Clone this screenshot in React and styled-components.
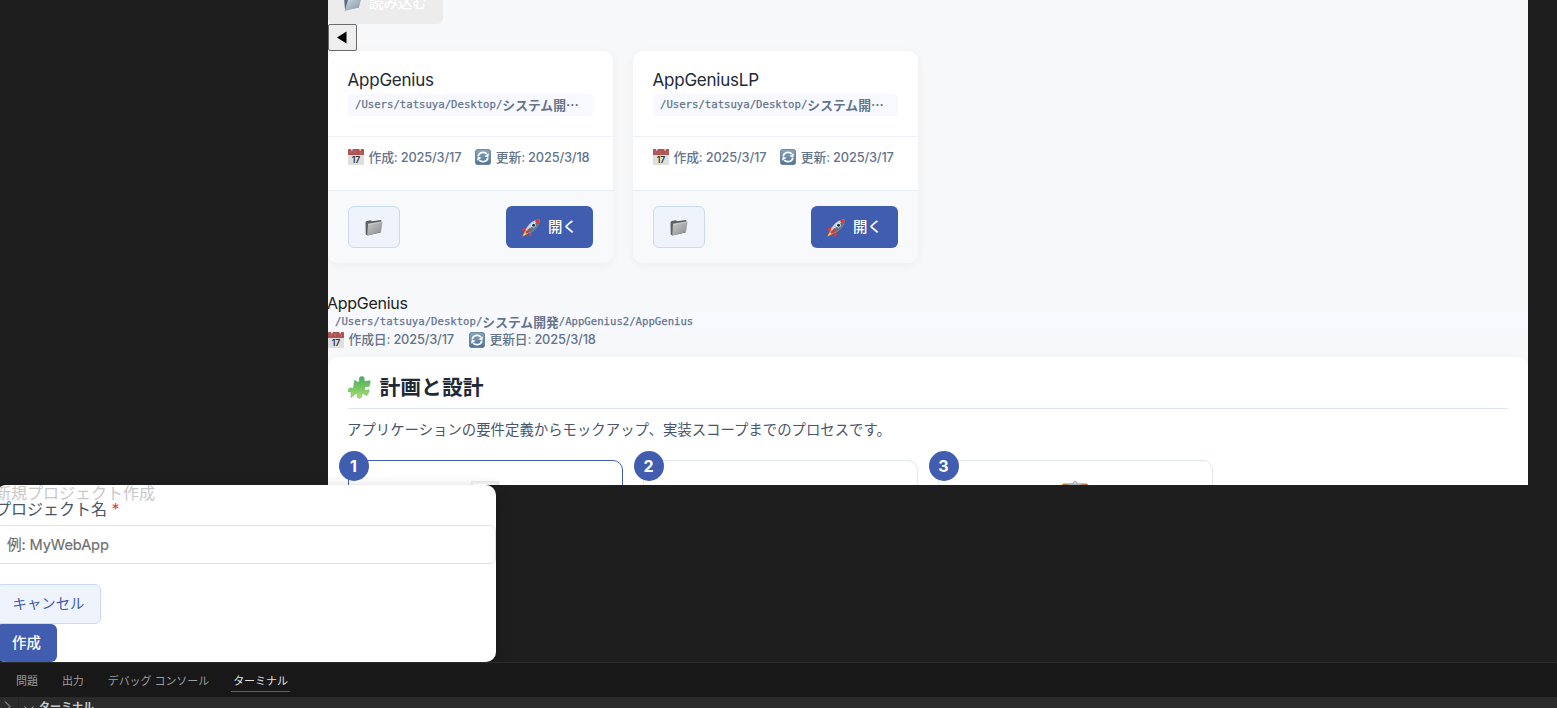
import React from 'react';
import styled, { createGlobalStyle, css } from 'styled-components';

const sans = `Inter, "Noto Sans CJK JP", sans-serif`;

const GlobalStyle = createGlobalStyle`
  *, *::before, *::after { box-sizing: border-box; }
  body {
    margin: 0;
    background: #1e1e1e;
    font-family: ${sans};
    color: #212936;
    overflow: hidden;
  }
  button, input { font-family: inherit; margin: 0; }
  svg { display: block; flex: none; }
`;

const Window = styled.div`
  display: flex;
  flex-direction: column;
  width: 1557px;
  height: 708px;
  overflow: hidden;
  background: #1e1e1e;
`;

const Webview = styled.main`
  flex: none;
  width: 1200px;
  height: 485px;
  margin-left: 328px;
  overflow: hidden;
  background: #f7f8fa;
`;

const LoadButton = styled.button`
  display: flex;
  align-items: center;
  gap: 7px;
  width: 115px;
  height: 42px;
  margin-top: -18px;
  padding: 0 0 1px 15px;
  border: 0;
  border-radius: 6px;
  background: #ececec;
  color: #fff;
  font-size: 14.4px;
  font-weight: 500;
  white-space: nowrap;
`;

const BackButton = styled.button`
  display: flex;
  align-items: center;
  width: 29px;
  height: 27px;
  padding: 0 0 1px 8px;
  border: 1px solid #6b6b6b;
  border-radius: 2px;
  background: #efefef;
`;

const ProjectGrid = styled.section`
  display: grid;
  grid-template-columns: repeat(4, 1fr);
  gap: 20px;
`;

const ProjectCard = styled.article`
  height: 212px;
  display: flex;
  flex-direction: column;
  overflow: hidden;
  border-radius: 10px;
  background: #fff;
  box-shadow: 0 2px 10px rgba(30, 40, 60, 0.05);
`;

const CardHead = styled.header`
  height: 86px;
  padding: 18px 20px 0;
  border-bottom: 1px solid #edf1f6;
`;

const CardTitle = styled.h3`
  margin: 0 0 0 -0.5px;
  height: 25px;
  line-height: 22px;
  font-size: 17px;
  font-weight: 400;
  letter-spacing: -0.22px;
`;

const Path = styled.div`
  display: flex;
  align-items: center;
  height: 22px;
  padding: 0 0 1px 7px;
  border-radius: 4px;
  background: #f8f9ff;
  color: #64748b;
  font-family: "DejaVu Sans Mono", "Noto Sans CJK JP", monospace;
  font-size: 10.65px;
  -webkit-text-stroke: 0.25px #64748b;
  white-space: nowrap;
  b {
    font-family: "Noto Sans CJK JP", sans-serif;
    font-size: 12.8px;
    line-height: 20px;
    -webkit-text-stroke: 0;
  }
`;

const Dates = styled.div`
  display: flex;
  align-items: center;
  gap: ${(p) => p.$gap || 14}px;
  height: ${(p) => p.$height || 54}px;
  padding: ${(p) => p.$pad || '0'};
  color: #64748b;
  font-size: 12.8px;
  line-height: 18px;
  white-space: nowrap;
  border-bottom: ${(p) => (p.$line ? '1px solid #e8edf4' : '0')};
`;

const DateItem = styled.span`
  display: flex;
  align-items: center;
  gap: 4.5px;
  font-weight: 500;
  letter-spacing: -0.16px;
  svg { margin-bottom: 1px; }
`;

const CardFoot = styled.footer`
  flex: 1;
  display: flex;
  justify-content: space-between;
  padding: 15px 20px 0;
  background: #f8f9fb;
`;

const buttonBase = css`
  display: flex;
  align-items: center;
  justify-content: center;
  border-radius: 6px;
  font-size: 14.4px;
  white-space: nowrap;
`;

const ButtonText = styled.span`
  padding-bottom: 3px;
`;

const SecondaryButton = styled.button`
  ${buttonBase}
  width: ${(p) => p.$width}px;
  height: ${(p) => p.$height}px;
  padding: 0;
  border: 1px solid #c9daf2;
  background: #eef3fc;
  color: #3f5bb0;
`;

const PrimaryButton = styled.button`
  ${buttonBase}
  gap: 8px;
  width: ${(p) => p.$width}px;
  height: ${(p) => p.$height}px;
  padding: 0;
  border: 0;
  background: #415db0;
  color: #fff;
  font-weight: 500;
  svg { margin-top: 1px; }
`;

const ProjectSummary = styled.section`
  height: 94px;
  padding-top: 30px;
`;

const SummaryTitle = styled.h3`
  margin: 0 0 0 -1px;
  height: 18px;
  line-height: 20px;
  font-size: 16px;
  font-weight: 400;
  letter-spacing: -0.28px;
  color: #222;
`;

const Phase = styled.section`
  height: 200px;
  padding: 14px 20px 0;
  border-radius: 10px;
  background: #fff;
  box-shadow: 0 2px 10px rgba(30, 40, 60, 0.05);
`;

const PhaseTitle = styled.h2`
  display: flex;
  align-items: center;
  gap: 8.5px;
  height: 38px;
  margin: 0;
  padding-bottom: 4px;
  border-bottom: 1px solid #dbe4f2;
  font-size: 20.8px;
  line-height: 30px;
  font-weight: 700;
  svg { margin-bottom: 1px; }
`;

const PhaseText = styled.p`
  margin: 9px 0 18px -1px;
  height: 24px;
  line-height: 24px;
  font-size: 14.4px;
  color: #4a5568;
`;

const Steps = styled.div`
  display: grid;
  grid-template-columns: repeat(4, 1fr);
  gap: 20px;
`;

const Step = styled.div`
  position: relative;
  display: flex;
  justify-content: center;
  height: 150px;
  padding: 20px 2px 0 0;
  border: 1px solid ${(p) => (p.$active ? '#415db0' : '#e0e7f1')};
  border-radius: 10px;
`;

const StepNumber = styled.span`
  position: absolute;
  top: -10px;
  left: -10px;
  width: 30px;
  height: 30px;
  padding-right: 1px;
  border-radius: 50%;
  background: #415db0;
  color: #fff;
  font-size: 16px;
  line-height: 30px;
  font-weight: 700;
  text-align: center;
`;

const Dialog = styled.form`
  flex: none;
  width: 500px;
  height: 177px;
  margin-left: -4px;
  overflow: hidden;
  border-radius: 10px;
  background: #fff;
  box-shadow: 0 4px 14px rgba(0, 0, 0, 0.25);
`;

const DialogTitle = styled.div`
  height: 16px;
  margin-left: -1px;
  line-height: 16px;
  font-size: 16px;
  color: #c8c8c8;
`;

const Label = styled.label`
  display: block;
  height: 24px;
  margin-left: -1px;
  line-height: 16px;
  font-size: 16px;
  color: #4a5568;
  span { color: #e53e3e; }
`;

const NameInput = styled.input`
  display: block;
  width: 500px;
  height: 39px;
  margin-bottom: 20px;
  padding: 0 10px;
  border: 1px solid #dbe4f2;
  border-radius: 6px;
  background: #fff;
  font-size: 14.6px;
  letter-spacing: -0.1px;
  &::placeholder { color: #707070; opacity: 1; -webkit-text-stroke: 0.2px #707070; }
`;

const Panel = styled.footer`
  flex: none;
  height: 46px;
  border-top: 1px solid #2b2b2b;
  background: #181818;
`;

const Tabs = styled.nav`
  display: flex;
  gap: 20px;
  height: 34px;
  padding: 6px 0 0 14px;
`;

const Tab = styled.span`
  height: 23px;
  padding: 1px 2px 0;
  line-height: 23px;
  font-size: 11px;
  letter-spacing: -0.07px;
  white-space: nowrap;
  color: ${(p) => (p.$active ? '#e2e2e2' : '#9d9d9d')};
  border-bottom: 1px solid ${(p) => (p.$active ? '#0078d4' : 'transparent')};
`;

const TerminalBar = styled.div`
  display: flex;
  align-items: flex-start;
  height: 11px;
  overflow: hidden;
  background: #2b2b2b;
  color: #ccc;
`;

const TerminalTitle = styled.b`
  margin-left: 5px;
  font-size: 11px;
  line-height: 21px;
`;

const Calendar = () => (
  <svg width="16" height="16" viewBox="0 0 16 16">
    <rect width="16" height="16" rx="0.8" fill="#dedfdf" />
    <path d="M0 .6Q0 0 .8 0h14.4q.8 0 .8.6V6H0z" fill="#ad5454" />
    <path d="M3 0h1.6v1.4H3zM11.4 0H13v1.4h-1.6z" fill="#f4e4e4" />
    <path d="M1.5 3h2M6 3h2M12 4h2" stroke="#c98181" strokeWidth=".7" />
    <text x="8" y="13.6" fontSize="8.6" fontWeight="600" fontFamily="Inter" textAnchor="middle" fill="#333">17</text>
  </svg>
);

const Refresh = () => (
  <svg width="16" height="16" viewBox="0 0 16 16">
    <defs>
      <linearGradient id="refresh" x2="0" y2="1">
        <stop stopColor="#8aa7bc" />
        <stop offset="1" stopColor="#4e7395" />
      </linearGradient>
    </defs>
    <rect x=".4" y=".4" width="15.2" height="15.2" rx="2.6" fill="url(#refresh)" stroke="#55728c" strokeWidth=".8" />
    <path d="M3.2 7.4A4.900 4.500 0 0 1 11.900 5M12.800 8.600A4.900 4.500 0 0 1 4.100 11" fill="none" stroke="#fff" strokeWidth="1.7" />
    <path d="M14 4.200 13.300 8.200 9.300 7.200zM2 11.800 2.700 7.800 6.700 8.800z" fill="#fff" />
  </svg>
);

const Folder = () => (
  <svg width="18" height="18" viewBox="0 0 18 18">
    <defs>
      <linearGradient id="folderGray" x2="1" y2="1">
        <stop stopColor="#c8c9ca" />
        <stop offset="1" stopColor="#898b8d" />
      </linearGradient>
    </defs>
    <path d="M.5 4.300 1.600 3l4.200-.7 1.200 1 8.800-1.400.8 1-.9 11.600L2.500 17.600.7 16.400z" fill="#5d6164" />
    <path d="M3 6.200 17.600 3.800 16 14 2.300 17.600z" fill="url(#folderGray)" />
    <path d="M3 6.200 17.600 3.800" stroke="#e8ebec" strokeWidth=".7" />
  </svg>
);

const OpenFolder = () => (
  <svg width="19" height="19" viewBox="0 0 19 19">
    <defs>
      <linearGradient id="folderOpen" x2="1" y2="1">
        <stop stopColor="#cfdbe2" />
        <stop offset="1" stopColor="#8196a3" />
      </linearGradient>
    </defs>
    <path d="M1 3.500 2.200 2l5-.6 1.300 1.100 7.700-.9.800 1.200-1 11.500-14 3z" fill="#526b7b" />
    <path d="M5 7 18.800 4.400 15.600 14.400 1.600 18z" fill="url(#folderOpen)" />
    <path d="M5 7 18.800 4.400" stroke="#e8ebec" strokeWidth=".8" />
  </svg>
);

const Rocket = () => (
  <svg width="18" height="18" viewBox="0 0 18 18">
    <path d="M5.2 8.2 1 9.2 0 12l4.5-.8zM10 12.5 9.7 16l-2.8 1.800.3-4.400z" fill="#e43b2e" />
    <path d="M3.2 11.3.2 17.7l6.2-3.3z" fill="#f6912a" />
    <path d="M3.8 12.5.8 17.2l4.6-3.1z" fill="#ffe25b" />
    <path d="M17.6.6C12.200.4 6.800 4.500 3.500 10.900l3.500 3.400C14 11.400 17.800 5.700 17.600.6z" fill="#c5d0d8" />
    <path d="M17.6.6C13.600 3.600 9 8.600 5.300 12.600l1.700 1.700C14 11.400 17.800 5.700 17.600.6z" fill="#62788c" />
    <path d="M17.6.6q-2.700-.1-5 1.100l3.800 3.700Q17.700 3 17.600.6z" fill="#d3403a" />
    <circle cx="11.500" cy="6.200" r="2.300" fill="#eef5fa" />
    <circle cx="11.600" cy="6.200" r="1.500" fill="#263746" />
    <path d="m8.300 9.600-4.300 4.600" stroke="#d8352f" strokeWidth="1.900" />
  </svg>
);

const Puzzle = () => (
  <svg width="23" height="23" viewBox="0 0 23 23">
    <defs>
      <linearGradient id="puzzle" x2="0" y2="1">
        <stop stopColor="#48aa67" />
        <stop offset=".55" stopColor="#77c85f" />
        <stop offset="1" stopColor="#b5df6e" />
      </linearGradient>
    </defs>
    <path
      d="M6.500 4.200 10 6.300Q11.600 6.600 11.300 4.600C10.800 2.200 11.800.4 13.800.4c2.100 0 3 1.500 2.400 3.200-.4 1.300.2 1.700 1.400 1.600l4.600-.4-.6 4.300c-.2 1.500-.9 1.900-2.200 1.500-1.700-.5-2.800.4-2.800 1.800 0 1.600 1.500 2.300 3 1.700 1.500-.5 1.900.2 1.300 1.500l-2.100 4-3.500-1.800c-1.400-.7-2-.2-1.700 1.200.4 1.900-.6 3.200-2.200 3.200-1.800 0-2.600-1.400-2.100-3 .4-1.300-.2-1.900-1.500-1.500L3 21.500l.3-4.300c.1-1.500-.6-1.900-1.600-1.300C.6 16.400 0 15 .4 13.600c.4-1.400 1.900-2 3.200-1.300 1.300.6 1.900.2 2-1z"
      fill="url(#puzzle)"
      stroke="#5b9a58"
      strokeWidth=".5"
    />
  </svg>
);

const Page = () => (
  <svg width="28" height="36" viewBox="0 0 28 36">
    <path d="M0 0h28v36H0z" fill="#e6e6e6" />
    <path d="M1.500 1.500h25V36h-25z" fill="#efefef" />
    <path d="M4 3.500h11" stroke="#fff" strokeDasharray="2 1" />
  </svg>
);

const Clipboard = () => (
  <svg width="28" height="36" viewBox="0 0 28 36">
    <rect x="1" y="2.500" width="26" height="33" rx="1.500" fill="#b9783a" />
    <path d="M7 3.500 11.500 2Q12 0 14 0t2.500 2L21 3.500V7H7z" fill="#a9b3b8" />
    <circle cx="14" cy="2" r=".8" fill="#fff" />
  </svg>
);

const Project = ({ name, updated }) => (
  <ProjectCard>
    <CardHead>
      <CardTitle>{name}</CardTitle>
      <Path>/Users/tatsuya/Desktop/<b>システム開⋯</b></Path>
    </CardHead>
    <Dates $pad="0 20px 12px" $line>
      <DateItem><Calendar />作成: 2025/3/17</DateItem>
      <DateItem><Refresh />更新: {updated}</DateItem>
    </Dates>
    <CardFoot>
      <SecondaryButton type="button" $width={52} $height={42}><Folder /></SecondaryButton>
      <PrimaryButton type="button" $width={87} $height={42}><Rocket /><ButtonText>開く</ButtonText></PrimaryButton>
    </CardFoot>
  </ProjectCard>
);

export default function App() {
  return (
    <Window>
      <GlobalStyle />
      <Webview>
        <LoadButton type="button"><OpenFolder /><ButtonText>読み込む</ButtonText></LoadButton>
        <BackButton type="button">
          <svg width="10" height="13" viewBox="0 0 10 13"><path d="M0 6.500 9.500.5v12z" fill="#000" /></svg>
        </BackButton>
        <ProjectGrid>
          <Project name="AppGenius" updated="2025/3/18" />
          <Project name="AppGeniusLP" updated="2025/3/17" />
        </ProjectGrid>
        <ProjectSummary>
          <SummaryTitle>AppGenius</SummaryTitle>
          <Path>/Users/tatsuya/Desktop/<b>システム開発</b>/AppGenius2/AppGenius</Path>
          <Dates $height={14} $gap={15}>
            <DateItem><Calendar />作成日: 2025/3/17</DateItem>
            <DateItem><Refresh />更新日: 2025/3/18</DateItem>
          </Dates>
        </ProjectSummary>
        <Phase>
          <PhaseTitle><Puzzle />計画と設計</PhaseTitle>
          <PhaseText>アプリケーションの要件定義からモックアップ、実装スコープまでのプロセスです。</PhaseText>
          <Steps>
            <Step $active><StepNumber>1</StepNumber><Page /></Step>
            <Step><StepNumber>2</StepNumber></Step>
            <Step><StepNumber>3</StepNumber><Clipboard /></Step>
          </Steps>
        </Phase>
      </Webview>
      <Dialog>
        <DialogTitle>新規プロジェクト作成</DialogTitle>
        <Label>プロジェクト名 <span>*</span></Label>
        <NameInput placeholder="例: MyWebApp" />
        <SecondaryButton type="button" $width={105} $height={40}><ButtonText>キャンセル</ButtonText></SecondaryButton>
        <PrimaryButton type="button" $width={61} $height={38}><ButtonText>作成</ButtonText></PrimaryButton>
      </Dialog>
      <Panel>
        <Tabs>
          <Tab>問題</Tab>
          <Tab>出力</Tab>
          <Tab>デバッグ コンソール</Tab>
          <Tab $active>ターミナル</Tab>
        </Tabs>
        <TerminalBar>
          <svg width="34" height="11" viewBox="0 0 34 11">
            <path d="m5 4.500 5 5-5 5M24.500 9.500l4.500 4 4.500-4" fill="none" stroke="#b8b8b8" />
            <path d="M18.500 0v11" stroke="#242424" />
          </svg>
          <TerminalTitle>ターミナル</TerminalTitle>
        </TerminalBar>
      </Panel>
    </Window>
  );
}
